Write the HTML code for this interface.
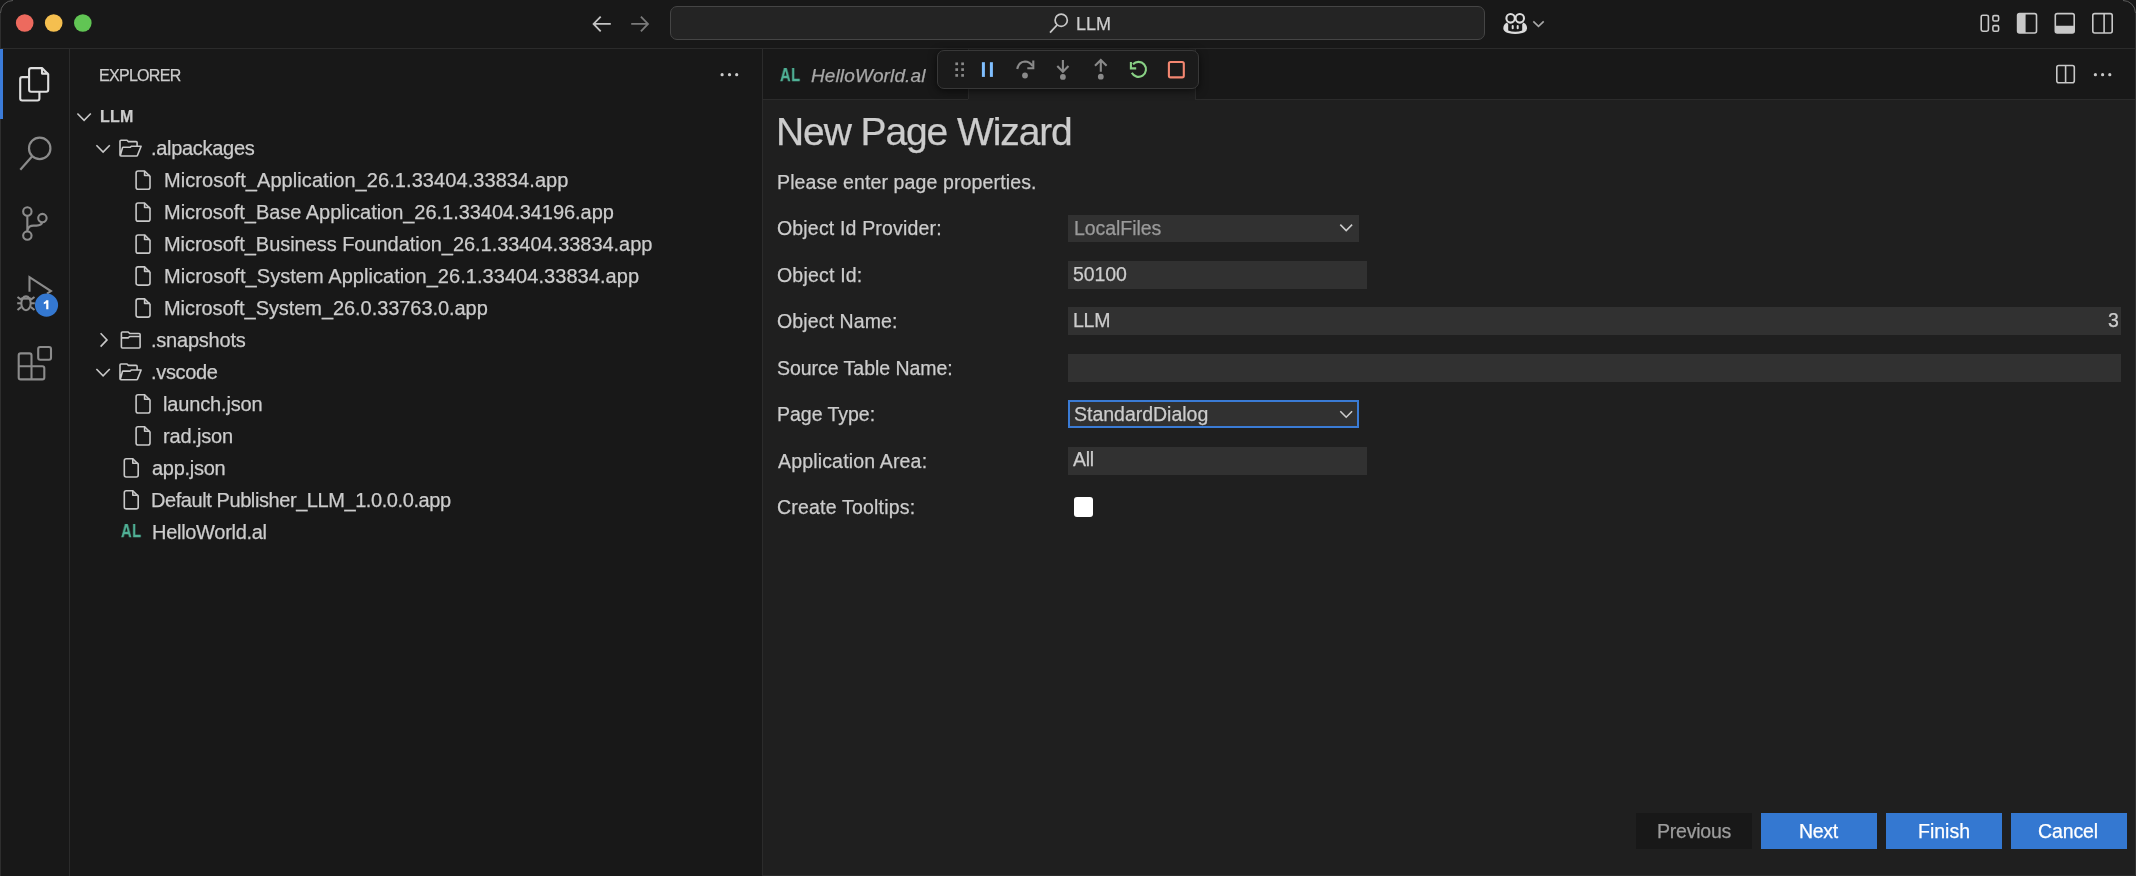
<!DOCTYPE html>
<html><head><meta charset="utf-8">
<style>
html,body{margin:0;padding:0;width:2136px;height:876px;overflow:hidden;background:#181818;}
*{box-sizing:border-box;}
body{font-family:"Liberation Sans",sans-serif;color:#cccccc;position:relative;}
.a{position:absolute;white-space:pre;line-height:1;will-change:transform;-webkit-text-stroke:0.25px currentColor;}
.bg{position:absolute;}
svg{position:absolute;left:0;top:0;}
</style></head><body>
<div class="bg" style="left:0px;top:0px;width:2136px;height:876px;background:#181818;"></div>
<div class="bg" style="left:0px;top:48px;width:2136px;height:1px;background:#2b2b2b;"></div>
<div class="bg" style="left:69px;top:49px;width:1px;height:827px;background:#2b2b2b;"></div>
<div class="bg" style="left:762px;top:49px;width:1px;height:827px;background:#2b2b2b;"></div>
<div class="bg" style="left:763px;top:99px;width:1373px;height:1px;background:#2b2b2b;"></div>
<div class="bg" style="left:763px;top:100px;width:1373px;height:776px;background:#1f1f1f;"></div>
<div class="bg" style="left:968px;top:49px;width:227px;height:51px;background:#1f1f1f;"></div>
<div class="bg" style="left:1195px;top:49px;width:1px;height:50px;background:#2b2b2b;"></div>
<div class="bg" style="left:968px;top:49px;width:1px;height:50px;background:#2b2b2b;"></div>
<div class="bg" style="left:0px;top:13px;width:1px;height:863px;background:#2e2e2e;"></div>
<div class="bg" style="left:2135px;top:13px;width:1px;height:863px;background:#333333;"></div>
<div class="bg" style="left:763px;top:875px;width:1373px;height:1px;background:#2b2b2b;"></div>
<div class="bg" style="left:0px;top:49px;width:3px;height:70px;background:#3b7bd8;"></div>
<div class="bg" style="left:670px;top:6px;width:815px;height:34px;background:#242424;border:1px solid #454545;border-radius:7px;"></div>
<div id="t0" class="a" style="left:98.50px;top:68.06px;font-size:16px;color:#cccccc;font-weight:normal;font-style:normal;letter-spacing:-0.700px;">EXPLORER</div>
<div id="t1" class="a" style="left:99.50px;top:109.26px;font-size:16px;color:#cccccc;font-weight:bold;font-style:normal;letter-spacing:0.200px;">LLM</div>
<div id="t2" class="a" style="left:151.00px;top:138.34px;font-size:20px;color:#cccccc;font-weight:normal;font-style:normal;letter-spacing:-0.300px;">.alpackages</div>
<div id="t3" class="a" style="left:163.50px;top:170.31px;font-size:20px;color:#cccccc;font-weight:normal;font-style:normal;letter-spacing:0.073px;">Microsoft_Application_26.1.33404.33834.app</div>
<div id="t4" class="a" style="left:163.50px;top:202.28px;font-size:20px;color:#cccccc;font-weight:normal;font-style:normal;letter-spacing:-0.033px;">Microsoft_Base Application_26.1.33404.34196.app</div>
<div id="t5" class="a" style="left:163.50px;top:234.25px;font-size:20px;color:#cccccc;font-weight:normal;font-style:normal;letter-spacing:-0.041px;">Microsoft_Business Foundation_26.1.33404.33834.app</div>
<div id="t6" class="a" style="left:163.50px;top:266.22px;font-size:20px;color:#cccccc;font-weight:normal;font-style:normal;letter-spacing:0.052px;">Microsoft_System Application_26.1.33404.33834.app</div>
<div id="t7" class="a" style="left:163.50px;top:298.19px;font-size:20px;color:#cccccc;font-weight:normal;font-style:normal;letter-spacing:-0.062px;">Microsoft_System_26.0.33763.0.app</div>
<div id="t8" class="a" style="left:151.00px;top:330.16px;font-size:20px;color:#cccccc;font-weight:normal;font-style:normal;letter-spacing:-0.222px;">.snapshots</div>
<div id="t9" class="a" style="left:151.00px;top:362.13px;font-size:20px;color:#cccccc;font-weight:normal;font-style:normal;letter-spacing:-0.333px;">.vscode</div>
<div id="t10" class="a" style="left:163.00px;top:394.10px;font-size:20px;color:#cccccc;font-weight:normal;font-style:normal;letter-spacing:-0.150px;">launch.json</div>
<div id="t11" class="a" style="left:163.00px;top:426.07px;font-size:20px;color:#cccccc;font-weight:normal;font-style:normal;letter-spacing:-0.143px;">rad.json</div>
<div id="t12" class="a" style="left:152.00px;top:458.04px;font-size:20px;color:#cccccc;font-weight:normal;font-style:normal;letter-spacing:-0.286px;">app.json</div>
<div id="t13" class="a" style="left:151.00px;top:490.01px;font-size:20px;color:#cccccc;font-weight:normal;font-style:normal;letter-spacing:-0.422px;">Default Publisher_LLM_1.0.0.0.app</div>
<div id="t14" class="a" style="left:151.50px;top:521.98px;font-size:20px;color:#cccccc;font-weight:normal;font-style:normal;letter-spacing:-0.292px;">HelloWorld.al</div>
<div id="t15" class="a" style="left:121.20px;top:523.49px;font-size:17.5px;color:#50b196;font-weight:bold;font-style:normal;letter-spacing:0.600px;transform:scaleX(0.84);transform-origin:0 0;">AL</div>
<div id="t16" class="a" style="left:1076.00px;top:14.76px;font-size:18px;color:#cccccc;font-weight:normal;font-style:normal;letter-spacing:-0.050px;">LLM</div>
<div id="t17" class="a" style="left:779.60px;top:66.79px;font-size:17.5px;color:#50b196;font-weight:bold;font-style:normal;letter-spacing:0.600px;transform:scaleX(0.84);transform-origin:0 0;">AL</div>
<div id="t18" class="a" style="left:810.50px;top:65.92px;font-size:19px;color:#a8a8a8;font-weight:normal;font-style:italic;letter-spacing:0.117px;">HelloWorld.al</div>
<div id="t19" class="a" style="left:775.50px;top:111.99px;font-size:39px;color:#cccccc;font-weight:normal;font-style:normal;letter-spacing:-1.093px;">New Page Wizard</div>
<div id="t20" class="a" style="left:777.00px;top:172.79px;font-size:19.5px;color:#cccccc;font-weight:normal;font-style:normal;letter-spacing:0.129px;">Please enter page properties.</div>
<div id="t21" class="a" style="left:777.00px;top:219.19px;font-size:19.5px;color:#cccccc;font-weight:normal;font-style:normal;letter-spacing:0.172px;">Object Id Provider:</div>
<div id="t22" class="a" style="left:777.00px;top:265.69px;font-size:19.5px;color:#cccccc;font-weight:normal;font-style:normal;letter-spacing:0.200px;">Object Id:</div>
<div id="t23" class="a" style="left:777.00px;top:312.19px;font-size:19.5px;color:#cccccc;font-weight:normal;font-style:normal;letter-spacing:0.109px;">Object Name:</div>
<div id="t24" class="a" style="left:777.00px;top:358.69px;font-size:19.5px;color:#cccccc;font-weight:normal;font-style:normal;letter-spacing:-0.035px;">Source Table Name:</div>
<div id="t25" class="a" style="left:777.00px;top:405.19px;font-size:19.5px;color:#cccccc;font-weight:normal;font-style:normal;letter-spacing:-0.022px;">Page Type:</div>
<div id="t26" class="a" style="left:778.00px;top:451.69px;font-size:19.5px;color:#cccccc;font-weight:normal;font-style:normal;letter-spacing:0.169px;">Application Area:</div>
<div id="t27" class="a" style="left:777.00px;top:498.19px;font-size:19.5px;color:#cccccc;font-weight:normal;font-style:normal;letter-spacing:0.200px;">Create Tooltips:</div>
<div class="bg" style="left:1068px;top:215px;width:291px;height:27px;background:#313131;"></div>
<div id="t28" class="a" style="left:1074.00px;top:219.19px;font-size:19.5px;color:#9a9a9a;font-weight:normal;font-style:normal;letter-spacing:-0.067px;">LocalFiles</div>
<div class="bg" style="left:1068px;top:261px;width:299px;height:28px;background:#313131;"></div>
<div id="t29" class="a" style="left:1072.50px;top:264.79px;font-size:19.5px;color:#cccccc;font-weight:normal;font-style:normal;letter-spacing:-0.075px;">50100</div>
<div class="bg" style="left:1068px;top:307px;width:1053px;height:28px;background:#313131;"></div>
<div id="t30" class="a" style="left:1072.50px;top:311.49px;font-size:19.5px;color:#cccccc;font-weight:normal;font-style:normal;letter-spacing:-0.250px;">LLM</div>
<div id="t31" class="a" style="left:2108.00px;top:310.99px;font-size:19.5px;color:#cccccc;font-weight:normal;font-style:normal;letter-spacing:2.500px;">3</div>
<div class="bg" style="left:1068px;top:354px;width:1053px;height:28px;background:#313131;"></div>
<div class="bg" style="left:1068px;top:400px;width:291px;height:28px;background:#313131;border:2px solid #3a7bd5;"></div>
<div id="t32" class="a" style="left:1074.00px;top:405.19px;font-size:19.5px;color:#cccccc;font-weight:normal;font-style:normal;letter-spacing:-0.014px;">StandardDialog</div>
<div class="bg" style="left:1068px;top:447px;width:299px;height:28px;background:#313131;"></div>
<div id="t33" class="a" style="left:1072.50px;top:450.49px;font-size:19.5px;color:#cccccc;font-weight:normal;font-style:normal;letter-spacing:-0.250px;">All</div>
<div class="bg" style="left:1074px;top:497px;width:19px;height:20px;background:#ffffff;border-radius:3px;"></div>
<div class="bg" style="left:1636px;top:813px;width:116px;height:36px;background:#181818;"></div>
<div id="t34" class="a" style="left:1657.00px;top:821.79px;font-size:19.5px;color:#9d9d9d;font-weight:normal;font-style:normal;letter-spacing:-0.214px;">Previous</div>
<div class="bg" style="left:1761px;top:813px;width:116px;height:36px;background:#3478d1;"></div>
<div id="t35" class="a" style="left:1798.80px;top:821.79px;font-size:19.5px;color:#ffffff;font-weight:normal;font-style:normal;letter-spacing:-0.333px;">Next</div>
<div class="bg" style="left:1886px;top:813px;width:116px;height:36px;background:#3478d1;"></div>
<div id="t36" class="a" style="left:1918.20px;top:821.79px;font-size:19.5px;color:#ffffff;font-weight:normal;font-style:normal;letter-spacing:-0.000px;">Finish</div>
<div class="bg" style="left:2011px;top:813px;width:116px;height:36px;background:#3478d1;"></div>
<div id="t37" class="a" style="left:2038.40px;top:821.79px;font-size:19.5px;color:#ffffff;font-weight:normal;font-style:normal;letter-spacing:-0.100px;">Cancel</div>
<div class="bg" style="left:937px;top:49.5px;width:262px;height:39.5px;background:#1b1b1b;border:1px solid #383838;border-radius:7px;box-shadow:0 2px 8px rgba(0,0,0,0.6);"></div>
<svg width="2136" height="876" viewBox="0 0 2136 876">
<path d="M0.5,13 A12.5,12.5 0 0 1 13,0.5" fill="none" stroke="#5a5a5a" stroke-width="1"/>
<path d="M2123,0.5 A12.5,12.5 0 0 1 2135.5,13" fill="none" stroke="#5a5a5a" stroke-width="1"/>
<circle cx="24.7" cy="23" r="8.8" fill="#ed6a5e"/>
<circle cx="53.7" cy="23" r="8.8" fill="#f5bf4f"/>
<circle cx="82.8" cy="23" r="8.8" fill="#61c554"/>
<g fill="none" stroke="#dedede" stroke-width="2.1" stroke-linejoin="round"><path d="M29.1,77.1 H22.2 Q20.2,77.1 20.2,79.1 V98.5 Q20.2,100.5 22.2,100.5 H37.4 Q39.4,100.5 39.4,98.5 V91.8"/><path d="M31.1,68.1 H42 L48.2,74.3 V89.8 Q48.2,91.8 46.2,91.8 H31.1 Q29.1,91.8 29.1,89.8 V70.1 Q29.1,68.1 31.1,68.1 Z"/><path d="M42,68.1 V73.6 H48.2"/></g>
<g fill="none" stroke="#8b8b8b" stroke-width="2.2" stroke-linecap="butt"><circle cx="39.7" cy="148.4" r="10.7"/><path d="M32.2,156.3 L20.3,169.8"/></g>
<g fill="none" stroke="#8b8b8b" stroke-width="2.1"><circle cx="27.35" cy="211.5" r="4.2"/><circle cx="42.4" cy="218.1" r="4.2"/><circle cx="27.35" cy="235.6" r="4.2"/><path d="M27.35,215.7 V231.4"/><path d="M27.6,229.8 Q28.6,225.6 33.5,225.6 H36.5 Q41.6,225.6 42.3,222.3"/></g>
<g fill="none" stroke="#8b8b8b" stroke-width="2.1" stroke-linejoin="miter"><path d="M29.5,291.7 V277.2 L50.9,291.1 L47,293.6"/><ellipse cx="26" cy="303.3" rx="4.7" ry="6.9"/><path d="M21,298.6 H31"/><path d="M17.5,297 L21.2,299.6 M17.2,303.3 H21 M17.5,310 L21.2,307 M34.5,297 L30.8,299.6 M34.8,303.3 H31 M34.5,310 L30.8,307"/></g>
<circle cx="46.5" cy="305.1" r="11.6" fill="#3478d1"/>
<path d="M46.2,300.3 H48.4 V309.3 H46.2 V303.2 Q45.2,303.9 43.8,304.2 V302.3 Q45.6,301.6 46.2,300.3 Z" fill="#ffffff"/>
<g fill="none" stroke="#8b8b8b" stroke-width="2.1" stroke-linejoin="round"><rect x="38.2" y="347" width="12.8" height="12.7" rx="2"/><path d="M31.5,366.3 V355.4 Q31.5,353.4 29.5,353.4 H20.7 Q18.7,353.4 18.7,355.4 V377.4 Q18.7,379.4 20.7,379.4 H42.3 Q44.3,379.4 44.3,377.4 V368.3 Q44.3,366.3 42.3,366.3 H18.7"/><path d="M31.5,366.3 V379.4"/></g>
<g fill="none" stroke-width="1.8" stroke-linecap="butt"><path d="M600.7,16.6 L593.6,23.9 L600.7,31.3 M594,23.9 H610.8" stroke="#c4c4c4"/><path d="M640.9,16.6 L648,23.9 L640.9,31.3 M647.6,23.9 H631.2" stroke="#7a7a7a"/></g>
<g fill="none" stroke="#c8c8c8" stroke-width="1.7"><circle cx="1061.2" cy="20.2" r="6.1"/><path d="M1057,25.1 L1050,32.6"/></g>
<g fill="none" stroke="#dcdcdc" stroke-width="2.1"><ellipse cx="1510.6" cy="18.3" rx="4.2" ry="4.3"/><ellipse cx="1519.8" cy="18.3" rx="4.2" ry="4.3"/></g>
<path fill="#dcdcdc" fill-rule="evenodd" d="M1507,22.4 Q1503.5,24 1503.3,28.2 Q1503.3,31.5 1508,33 Q1512,34 1515.2,34 Q1518.4,34 1522.4,33 Q1527.1,31.5 1527.1,28.2 Q1526.9,24 1523.4,22.4 L1522.2,24.2 L1522.2,30.5 Q1519,31.8 1515.2,31.8 Q1511.4,31.8 1508.2,30.5 L1508.2,24.2 Z"/>
<g stroke="#dcdcdc" stroke-width="2" stroke-linecap="round"><path d="M1512.7,26 V28.2 M1517.7,26 V28.2"/></g>
<path d="M1533.3,21.4 L1538.5,26.4 L1543.7,21.4" fill="none" stroke="#a8a8a8" stroke-width="1.6"/>
<g fill="none" stroke="#c8c8c8" stroke-width="1.6"><rect x="1981.2" y="15.2" width="7.2" height="16" rx="1.6"/><rect x="1992.9" y="15.6" width="5.7" height="5.4" rx="1.4"/><rect x="1992.9" y="25.6" width="5.7" height="5.6" rx="1.4"/><rect x="2017.6" y="13.6" width="18.9" height="19.4" rx="2"/><rect x="2055.3" y="13.6" width="18.9" height="19.4" rx="2"/><rect x="2092.8" y="13.6" width="19.4" height="19.4" rx="2"/><path d="M2104.1,13.6 V33"/></g>
<path fill="#c8c8c8" d="M2019.6,13.6 H2025.6 V33 H2019.6 Q2017.6,33 2017.6,31 V15.6 Q2017.6,13.6 2019.6,13.6 Z"/>
<path fill="#c8c8c8" d="M2055.3,25.8 H2074.2 V31 Q2074.2,33 2072.2,33 H2057.3 Q2055.3,33 2055.3,31 Z"/>
<g fill="none" stroke="#c8c8c8" stroke-width="1.6"><rect x="2056.8" y="65.5" width="17.5" height="17.3" rx="2"/><path d="M2065.6,65.5 V82.8"/></g>
<g fill="#c8c8c8"><circle cx="2095.4" cy="74.7" r="1.6"/><circle cx="2102.6" cy="74.7" r="1.6"/><circle cx="2109.8" cy="74.7" r="1.6"/></g>
<g fill="#cccccc"><circle cx="722.1" cy="74.7" r="1.6"/><circle cx="729.5" cy="74.7" r="1.6"/><circle cx="736.7" cy="74.7" r="1.6"/></g>
<path d="M77.39999999999999,113.5 L84.1,120.30000000000001 L90.8,113.5" fill="none" stroke="#c8c8c8" stroke-width="1.6"/>
<path d="M96.39999999999999,145.2 L103.1,152.0 L109.8,145.2" fill="none" stroke="#c8c8c8" stroke-width="1.6"/>
<g transform="translate(0,0.0)" fill="none" stroke="#c8c8c8" stroke-width="1.6" stroke-linejoin="round"><path d="M137.1,145.5 V142.6 Q137.1,141.6 136.1,141.6 H128.4 L127,140.2 H121 Q120,140.2 120,141.2 V155 Q120,156 121,156 H136.6 Q137.3,156 137.5,155.3 L141.1,146.2 H131.5 L130.1,147.3 H123.3 Q122.6,147.3 122.4,148 L120.3,155.6"/></g>
<g transform="translate(0.0,0.0)" fill="none" stroke="#c8c8c8" stroke-width="1.6" stroke-linejoin="round"><path d="M138.1,171 H144.6 L150,176.4 V187.2 Q150,189.2 148,189.2 H138.1 Q136.1,189.2 136.1,187.2 V173 Q136.1,171 138.1,171 Z"/><path d="M144.6,171 V175.5 H150"/></g>
<g transform="translate(0.0,31.97)" fill="none" stroke="#c8c8c8" stroke-width="1.6" stroke-linejoin="round"><path d="M138.1,171 H144.6 L150,176.4 V187.2 Q150,189.2 148,189.2 H138.1 Q136.1,189.2 136.1,187.2 V173 Q136.1,171 138.1,171 Z"/><path d="M144.6,171 V175.5 H150"/></g>
<g transform="translate(0.0,63.94)" fill="none" stroke="#c8c8c8" stroke-width="1.6" stroke-linejoin="round"><path d="M138.1,171 H144.6 L150,176.4 V187.2 Q150,189.2 148,189.2 H138.1 Q136.1,189.2 136.1,187.2 V173 Q136.1,171 138.1,171 Z"/><path d="M144.6,171 V175.5 H150"/></g>
<g transform="translate(0.0,95.90999999999997)" fill="none" stroke="#c8c8c8" stroke-width="1.6" stroke-linejoin="round"><path d="M138.1,171 H144.6 L150,176.4 V187.2 Q150,189.2 148,189.2 H138.1 Q136.1,189.2 136.1,187.2 V173 Q136.1,171 138.1,171 Z"/><path d="M144.6,171 V175.5 H150"/></g>
<g transform="translate(0.0,127.88)" fill="none" stroke="#c8c8c8" stroke-width="1.6" stroke-linejoin="round"><path d="M138.1,171 H144.6 L150,176.4 V187.2 Q150,189.2 148,189.2 H138.1 Q136.1,189.2 136.1,187.2 V173 Q136.1,171 138.1,171 Z"/><path d="M144.6,171 V175.5 H150"/></g>
<path d="M100.6,333.2 L107.0,339.9 L100.6,346.59999999999997" fill="none" stroke="#c8c8c8" stroke-width="1.6"/>
<g transform="translate(0.0,0)" fill="none" stroke="#c8c8c8" stroke-width="1.6" stroke-linejoin="round"><path d="M122.4,332 H128.2 L129.7,333.5 H139.1 Q140.1,333.5 140.1,334.5 V347 Q140.1,348 139.1,348 H122.4 Q121.4,348 121.4,347 V333 Q121.4,332 122.4,332 Z"/><path d="M121.4,337.9 H128.2 L129.7,336.5 H140.1"/></g>
<path d="M96.39999999999999,368.99 L103.1,375.78999999999996 L109.8,368.99" fill="none" stroke="#c8c8c8" stroke-width="1.6"/>
<g transform="translate(0,223.79000000000002)" fill="none" stroke="#c8c8c8" stroke-width="1.6" stroke-linejoin="round"><path d="M137.1,145.5 V142.6 Q137.1,141.6 136.1,141.6 H128.4 L127,140.2 H121 Q120,140.2 120,141.2 V155 Q120,156 121,156 H136.6 Q137.3,156 137.5,155.3 L141.1,146.2 H131.5 L130.1,147.3 H123.3 Q122.6,147.3 122.4,148 L120.3,155.6"/></g>
<g transform="translate(0.0,223.78999999999996)" fill="none" stroke="#c8c8c8" stroke-width="1.6" stroke-linejoin="round"><path d="M138.1,171 H144.6 L150,176.4 V187.2 Q150,189.2 148,189.2 H138.1 Q136.1,189.2 136.1,187.2 V173 Q136.1,171 138.1,171 Z"/><path d="M144.6,171 V175.5 H150"/></g>
<g transform="translate(0.0,255.76)" fill="none" stroke="#c8c8c8" stroke-width="1.6" stroke-linejoin="round"><path d="M138.1,171 H144.6 L150,176.4 V187.2 Q150,189.2 148,189.2 H138.1 Q136.1,189.2 136.1,187.2 V173 Q136.1,171 138.1,171 Z"/><path d="M144.6,171 V175.5 H150"/></g>
<g transform="translate(-11.799999999999997,287.73)" fill="none" stroke="#c8c8c8" stroke-width="1.6" stroke-linejoin="round"><path d="M138.1,171 H144.6 L150,176.4 V187.2 Q150,189.2 148,189.2 H138.1 Q136.1,189.2 136.1,187.2 V173 Q136.1,171 138.1,171 Z"/><path d="M144.6,171 V175.5 H150"/></g>
<g transform="translate(-11.799999999999997,319.7)" fill="none" stroke="#c8c8c8" stroke-width="1.6" stroke-linejoin="round"><path d="M138.1,171 H144.6 L150,176.4 V187.2 Q150,189.2 148,189.2 H138.1 Q136.1,189.2 136.1,187.2 V173 Q136.1,171 138.1,171 Z"/><path d="M144.6,171 V175.5 H150"/></g>
<path d="M1340.3,411.3 L1346.2,417.2 L1352.1,411.3" fill="none" stroke="#cccccc" stroke-width="1.6"/>
<path d="M1340.3,224.6 L1346.2,230.5 L1352.1,224.6" fill="none" stroke="#cccccc" stroke-width="1.6"/>
<rect x="955.35" y="62.449999999999996" width="2.7" height="2.7" fill="#8a8a8a"/>
<rect x="955.35" y="68.25" width="2.7" height="2.7" fill="#8a8a8a"/>
<rect x="955.35" y="74.05000000000001" width="2.7" height="2.7" fill="#8a8a8a"/>
<rect x="961.25" y="62.449999999999996" width="2.7" height="2.7" fill="#8a8a8a"/>
<rect x="961.25" y="68.25" width="2.7" height="2.7" fill="#8a8a8a"/>
<rect x="961.25" y="74.05000000000001" width="2.7" height="2.7" fill="#8a8a8a"/>
<rect x="981.9" y="62.2" width="3" height="14.7" fill="#80bfff"/><rect x="989.9" y="62.2" width="3" height="14.7" fill="#80bfff"/>
<g fill="none" stroke="#8a8a8a" stroke-width="2.1"><path d="M1017.2,69 Q1018.5,62 1025,61.5 Q1029.5,61.5 1032.5,66"/><path d="M1033.3,60.6 V68.2 H1027.3"/><path d="M1062.9,59.9 V71.5 M1057.3,66.1 L1062.9,71.7 L1068.5,66.1"/><path d="M1100.8,60.4 V71.7 M1095,65.8 L1100.8,60 L1106.6,65.8"/></g>
<g fill="#8a8a8a"><circle cx="1025" cy="75.5" r="2.9"/><circle cx="1062.9" cy="76.9" r="2.9"/><circle cx="1100.8" cy="76.7" r="2.9"/></g>
<g fill="none" stroke="#89d185" stroke-width="2.1"><path d="M1131.8,72.8 A7.5,7.5 0 1 0 1133,64.2"/><path d="M1130.9,61.9 V68.4 H1136.2"/></g>
<rect x="1168.9" y="62" width="14.9" height="15.4" rx="1.6" fill="none" stroke="#f48771" stroke-width="2.1"/>
</svg>
</body></html>
